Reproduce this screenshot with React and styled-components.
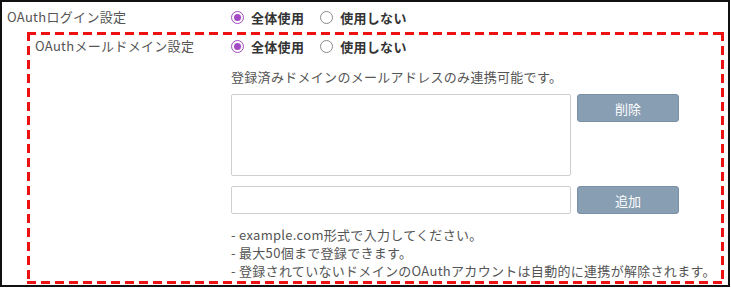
import styled, { createGlobalStyle } from 'styled-components';

const GlobalStyle = createGlobalStyle`
  body {
    margin: 0;
    background: #fff;
    font-family: "Noto Sans CJK JP", "Noto Sans", sans-serif;
    font-size: 13px;
    letter-spacing: 0.3px;
    color: #555;
  }
`;

const dashX = 'repeating-linear-gradient(90deg, #ee1111 0 9px, transparent 9px 14px)';
const dashY = 'repeating-linear-gradient(180deg, #ee1111 0 9px, transparent 9px 14px)';

const Frame = styled.div`
  box-sizing: border-box;
  width: 730px;
  height: 287px;
  border: 2px solid #111;
  display: flex;
  flex-direction: column;
`;

const TopRow = styled.div`
  display: grid;
  grid-template-columns: 224px 1fr;
  align-items: center;
  height: 30px;
  padding-left: 5px;
`;

// dashed red frame drawn with gradients so the dash length matches
const Highlight = styled.div`
  box-sizing: border-box;
  flex: 1;
  margin: 0 4px 1px 25px;
  background:
    ${dashX} left top / 100% 3px no-repeat,
    ${dashX} left bottom / 100% 3px no-repeat,
    ${dashY} left top / 3px 100% no-repeat,
    ${dashY} right top / 3px 100% no-repeat;
  display: grid;
  grid-template-columns: 196px 1fr;
  padding: 4px 3px 3px 8px;
`;

const Label = styled.div`
  line-height: 20px;
  white-space: nowrap;
`;

const Value = styled.div`
  display: flex;
  flex-direction: column;
`;

const RadioGroup = styled.div`
  display: flex;
  align-items: center;
  gap: 16px;
  height: 20px;
`;

const Option = styled.label`
  display: inline-flex;
  align-items: center;
  gap: 7px;
  font-weight: 700;
  color: #333;
  cursor: pointer;
`;

const Dot = styled.span`
  box-sizing: border-box;
  width: 13px;
  height: 13px;
  border-radius: 50%;
  border: ${({ $checked }) => ($checked ? '1.5px solid #a349c4' : '1px solid #8a8a8a')};
  background: #fff;
  display: flex;
  align-items: center;
  justify-content: center;

  &::after {
    content: '';
    width: 7px;
    height: 7px;
    border-radius: 50%;
    background: ${({ $checked }) => ($checked ? '#a349c4' : 'transparent')};
  }
`;

const Description = styled.div`
  margin-top: 11px;
  line-height: 20px;
`;

const Line = styled.div`
  display: flex;
  gap: 6px;
  align-items: flex-start;
  margin-top: ${({ $top }) => $top}px;
`;

const DomainList = styled.div`
  box-sizing: border-box;
  width: 340px;
  height: 82px;
  border: 1px solid #cfcfcf;
  border-radius: 2px;
`;

const DomainInput = styled.div`
  box-sizing: border-box;
  width: 340px;
  height: 28px;
  border: 1px solid #cfcfcf;
  border-radius: 2px;
`;

const Button = styled.button`
  box-sizing: border-box;
  width: 102px;
  height: 28px;
  padding: 0;
  border: 1px solid #7b90a4;
  border-radius: 3px;
  background: #889eb3;
  color: #fff;
  font: inherit;
  font-size: 13px;
`;

const Notes = styled.ul`
  list-style: none;
  margin: 12px 0 0;
  padding: 0;
  line-height: 18px;
  white-space: nowrap;
`;

function Radios() {
  return (
    <RadioGroup>
      <Option>
        <Dot $checked />
        全体使用
      </Option>
      <Option>
        <Dot />
        使用しない
      </Option>
    </RadioGroup>
  );
}

export default function App() {
  return (
    <>
      <GlobalStyle />
      <Frame>
        <TopRow>
          <Label>OAuthログイン設定</Label>
          <Radios />
        </TopRow>
        <Highlight>
          <Label>OAuthメールドメイン設定</Label>
          <Value>
            <Radios />
            <Description>登録済みドメインのメールアドレスのみ連携可能です。</Description>
            <Line $top={7}>
              <DomainList />
              <Button>削除</Button>
            </Line>
            <Line $top={10}>
              <DomainInput />
              <Button>追加</Button>
            </Line>
            <Notes>
              <li>- example.com形式で入力してください。</li>
              <li>- 最大50個まで登録できます。</li>
              <li>- 登録されていないドメインのOAuthアカウントは自動的に連携が解除されます。</li>
            </Notes>
          </Value>
        </Highlight>
      </Frame>
    </>
  );
}
